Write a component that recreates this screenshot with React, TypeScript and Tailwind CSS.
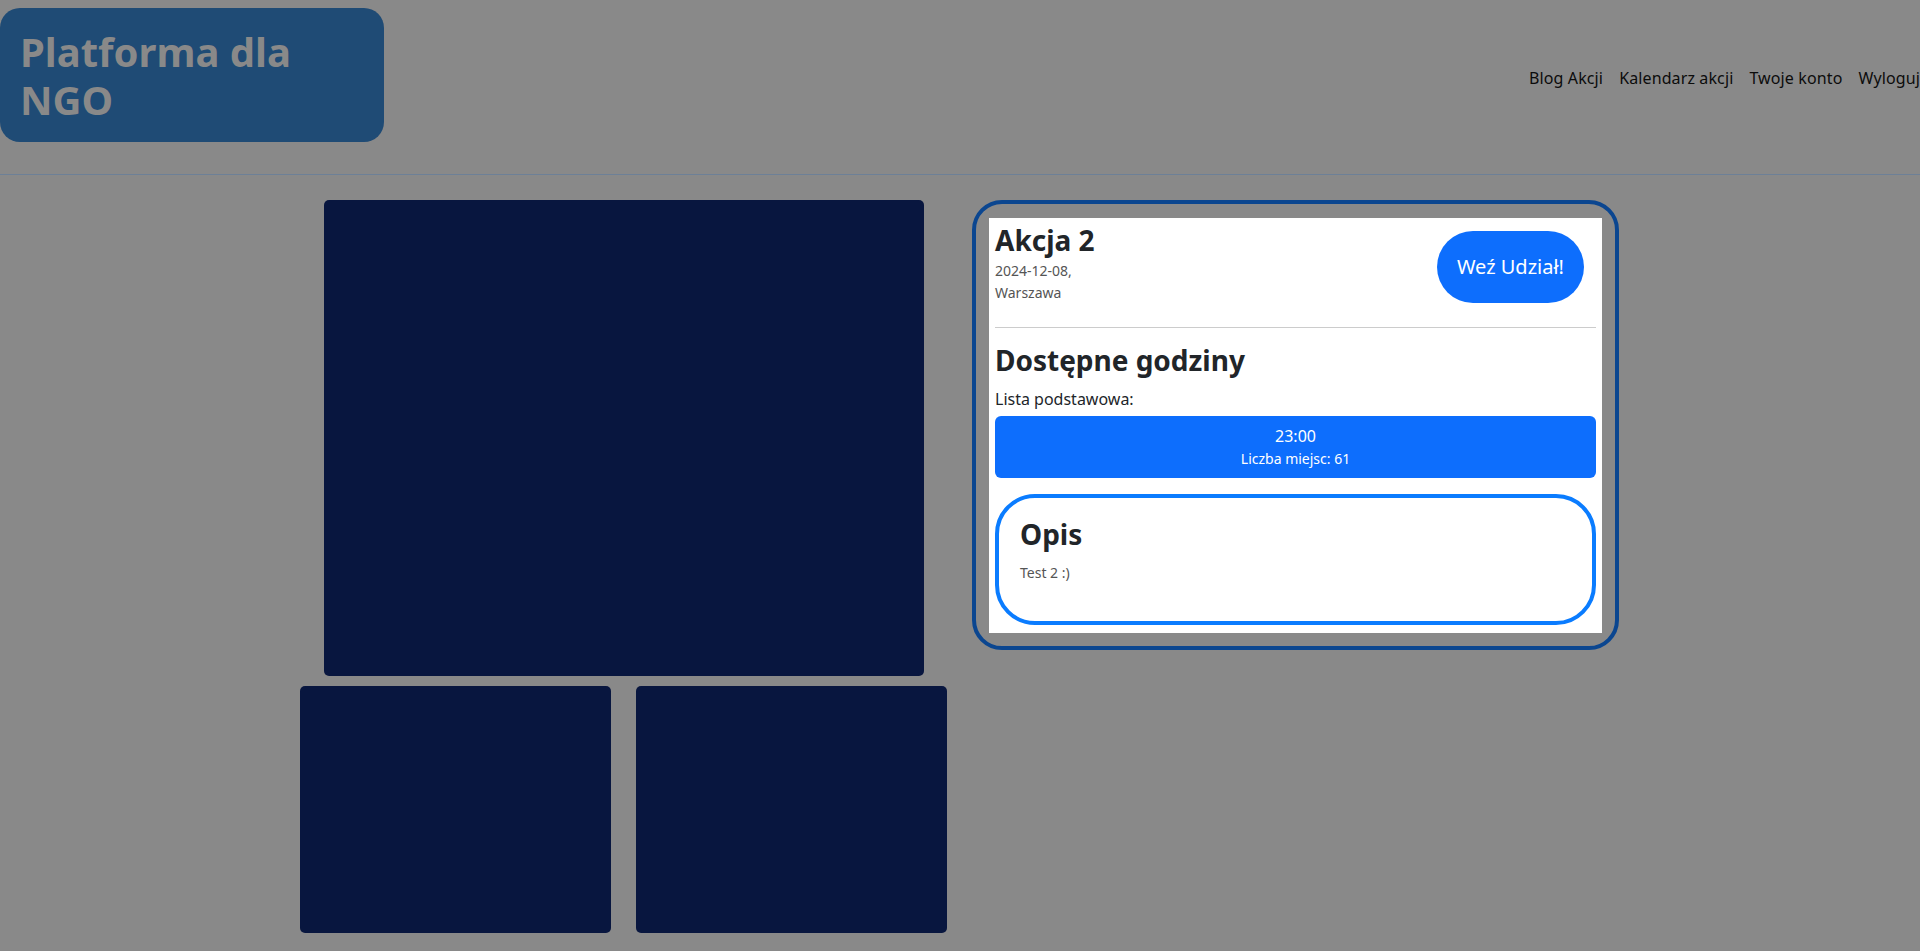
export default function App() {
    const navItems = ["Blog Akcji", "Kalendarz akcji", "Twoje konto", "Wyloguj"];

    return (
        <div className="min-h-[951px] w-full overflow-hidden bg-[#898989] font-['Noto_Sans',sans-serif] text-[#212529]">
            {/* Header */}
            <header className="flex h-[175px] items-start justify-between border-b border-[#6d8097]">
                <div className="mt-[8px] w-1/5 rounded-[20px] bg-[#1f4b75] px-[20px] pt-[20px] pb-[18px]">
                    <h1 className="text-[40px] font-bold leading-[1.2] text-[#898989]">
                        Platforma dla NGO
                    </h1>
                </div>
                <nav className="mt-[66px] -mr-[8px]">
                    <ul className="flex">
                        {navItems.map((item) => (
                            <li key={item}>
                                <a className="block px-2 text-base leading-6 tracking-[0.12px] text-[#0c0c0c]">{item}</a>
                            </li>
                        ))}
                    </ul>
                </nav>
            </header>

            {/* Main */}
            <main className="mx-auto mt-[25px] flex w-[1320px]">
                {/* Gallery */}
                <div className="flex w-[647px] flex-col items-center">
                    <div className="h-[476px] w-[600px] rounded-[5px] bg-[#08163f]" />
                    <div className="mt-[10px] flex gap-[25px]">
                        <div className="h-[247px] w-[311px] rounded-[5px] bg-[#08163f]" />
                        <div className="h-[247px] w-[311px] rounded-[5px] bg-[#08163f]" />
                    </div>
                </div>

                {/* Details card */}
                <div className="ml-[25px] w-[647px] self-start">
                    <div className="rounded-[30px] border-4 border-[#0b4690] px-[13px] pt-[14px] pb-[13px]">
                        <div className="bg-white px-[6px] pt-[6px] pb-[8px]">
                            <div className="flex items-start justify-between">
                                <div>
                                    <h3 className="text-[28px] font-bold leading-[1.2]">Akcja 2</h3>
                                    <p className="mt-[2px] text-sm leading-[22px] text-[#555]">2024-12-08,</p>
                                    <p className="text-sm leading-[22px] text-[#555]">Warszawa</p>
                                </div>
                                <button className="mt-[7px] mr-[12px] h-[72px] rounded-full bg-[#0d6efd] px-[20px] text-[20px] text-white">
                                    Weź Udział!
                                </button>
                            </div>

                            <hr className="mt-[23px] mb-[16px] border-t border-[#ccc]" />

                            <h3 className="text-[28px] font-bold leading-[1.2]">Dostępne godziny</h3>
                            <p className="mt-[10px] text-base leading-6">Lista podstawowa:</p>

                            <div className="mt-[5px] rounded-[6px] bg-[#0d6efd] pt-[8px] pb-[8px] text-center text-white">
                                <p className="text-base leading-6">23:00</p>
                                <p className="text-sm leading-[22px]">Liczba miejsc: 61</p>
                            </div>

                            <div className="mt-[16px] rounded-[40px] border-4 border-[#0a7cff] px-[21px] pt-[20px] pb-[37px]">
                                <h3 className="text-[28px] font-bold leading-[1.2]">Opis</h3>
                                <p className="mt-[10px] text-sm leading-[22px] text-[#555]">Test 2 :)</p>
                            </div>
                        </div>
                    </div>
                </div>
            </main>
        </div>
    );
}
